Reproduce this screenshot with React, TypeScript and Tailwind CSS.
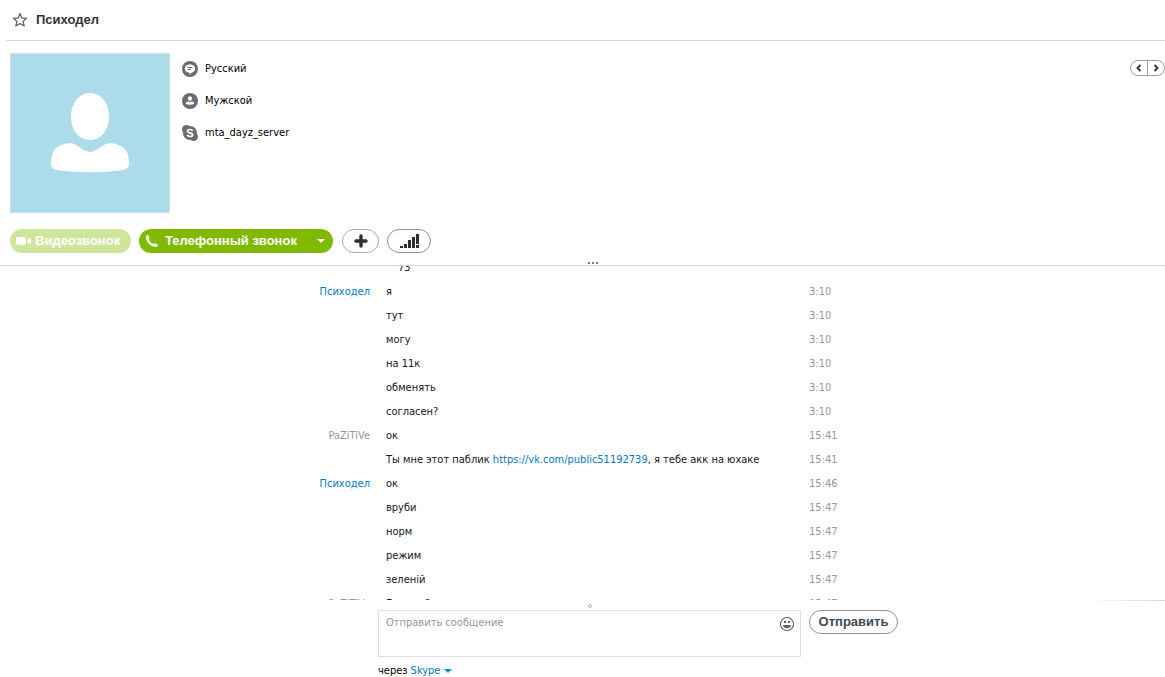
import React from 'react';

interface Message {
    author?: string;
    own?: boolean;
    text: React.ReactNode;
    time: string;
}

const messages: Message[] = [
    { text: <span className="pl-3">73</span>, time: '' },
    { author: 'Психодел', text: 'я', time: '3:10' },
    { text: 'тут', time: '3:10' },
    { text: 'могу', time: '3:10' },
    { text: 'на 11к', time: '3:10' },
    { text: 'обменять', time: '3:10' },
    { text: 'согласен?', time: '3:10' },
    { author: 'PaZiTiVe', own: true, text: 'ок', time: '15:41' },
    {
        text: (
            <>
                Ты мне этот паблик{' '}
                <a href="https://vk.com/public51192739" className="text-[#0078ca]">https://vk.com/public51192739</a>
                , я тебе акк на юхаке
            </>
        ),
        time: '15:41',
    },
    { author: 'Психодел', text: 'ок', time: '15:46' },
    { text: 'вруби', time: '15:47' },
    { text: 'норм', time: '15:47' },
    { text: 'режим', time: '15:47' },
    { text: 'зеленій', time: '15:47' },
    { author: 'PaZiTiVe', own: true, text: 'Готово ?', time: '15:47' },
];

const StarIcon = () => (
    <svg width="16" height="16" viewBox="0 0 16 16" fill="none" stroke="#66676b" strokeWidth="1.3" strokeLinejoin="round">
        <path d="M8 1.6 L9.8 6 L14.6 6.3 L11 9.4 L12.2 14 L8 11.6 L3.8 14 L5 9.4 L1.4 6.3 L6.2 6 Z" />
    </svg>
);

const LanguageIcon = () => (
    <svg width="16" height="16" viewBox="0 0 16 16">
        <circle cx="8" cy="8" r="8" fill="#6b6c71" />
        <path d="M8 3.4 C11 3.4 13.2 5.2 13.2 7.6 C13.2 10 11.4 11.4 9.6 11.7 L7.6 13.4 L7.4 11.8 C4.8 11.7 2.8 10 2.8 7.6 C2.8 5.2 5 3.4 8 3.4 Z" fill="#fff" />
        <path d="M5.5 6.5 H10.5 M5.5 8.5 H9" stroke="#6b6c71" strokeWidth="1" />
    </svg>
);

const GenderIcon = () => (
    <svg width="16" height="16" viewBox="0 0 16 16">
        <circle cx="8" cy="8" r="8" fill="#6b6c71" />
        <ellipse cx="8" cy="5.6" rx="2" ry="2.4" fill="#fff" />
        <path d="M3.8 11 C3.8 9.4 5 8.6 6.2 8.6 Q8 10 9.8 8.6 C11 8.6 12.2 9.4 12.2 11 Q8 12.6 3.8 11 Z" fill="#fff" />
    </svg>
);

const SkypeIcon = () => (
    <svg width="16" height="16" viewBox="0 0 16 16">
        <circle cx="4.4" cy="4.4" r="4.4" fill="#6b6c71" />
        <circle cx="11.6" cy="11.6" r="4.4" fill="#6b6c71" />
        <circle cx="8" cy="8" r="7" fill="#6b6c71" />
        <path d="M10.6 5.9 C10.2 4.9 9.2 4.5 8 4.5 C6.6 4.5 5.5 5.1 5.5 6.2 C5.5 8.5 10.6 7.2 10.6 9.7 C10.6 10.9 9.5 11.5 8.1 11.5 C6.7 11.5 5.6 10.9 5.3 9.8" fill="none" stroke="#fff" strokeWidth="1.7" />
    </svg>
);

const Avatar = () => (
    <svg viewBox="0 0 158 158" className="h-40 w-40 shrink-0 border border-[#d9dcde] bg-[#acdbe9]" role="img" aria-label="Психодел">
        <path d="M79 39 C90 39 98 49 98 63 C98 76 90 86 79 86 C68 86 60 76 60 63 C60 49 68 39 79 39 Z" fill="#fff" />
        <path d="M40 107 C41 98 43 95 48 92 C54 89 60 88 65 91 C71 94 74 98 79 98 C84 98 87 94 93 91 C98 88 104 89 110 92 C115 95 117 98 118 107 C119 113 116 115 112 116 C94 119 64 119 46 116 C42 115 39 113 40 107 Z" fill="#fff" />
    </svg>
);

const VideoIcon = () => (
    <svg width="15" height="10" viewBox="0 0 15 10" fill="#fff">
        <rect x="0" y="1" width="10" height="8" rx="2" />
        <path d="M11 4.2 L15 1.5 V8.5 L11 5.8 Z" />
    </svg>
);

const PhoneIcon = () => (
    <svg width="14" height="14" viewBox="0 0 14 14" fill="#fff">
        <path d="M1 3 C1 1.6 2 1 3 1 L4.6 3.6 C4.6 4.4 3.8 4.8 3.9 5.4 C4.6 7.4 6.4 9.2 8.4 10 C9 10.1 9.4 9.3 10.2 9.3 L13 10.8 C13 12 12.2 13 11 13 C5.6 12.8 1.2 8.4 1 3 Z" />
    </svg>
);

const SignalIcon = () => (
    <svg width="20" height="14" viewBox="-1 0 20 14" fill="#2c2f38" shapeRendering="crispEdges">
        <rect x="0" y="12" width="3" height="2" />
        <rect x="4" y="10" width="3" height="4" />
        <rect x="8" y="6" width="3" height="8" />
        <rect x="12" y="3" width="3" height="11" />
        <rect x="16" y="0" width="3" height="10" />
        <rect x="16" y="11" width="3" height="3" />
    </svg>
);

const SmileIcon = () => (
    <svg width="16" height="16" viewBox="0 0 16 16">
        <circle cx="8" cy="8" r="6.5" fill="none" stroke="#5f6064" strokeWidth="1.1" />
        <rect x="5" y="5" width="2" height="2" fill="#5f6064" />
        <rect x="9" y="5" width="2" height="2" fill="#5f6064" />
        <path d="M4 9 H12 C11.6 11.2 10 12.3 8 12.3 C6 12.3 4.4 11.2 4 9 Z" fill="#5f6064" />
    </svg>
);

const details = [
    { icon: <LanguageIcon />, text: 'Русский' },
    { icon: <GenderIcon />, text: 'Мужской' },
    { icon: <SkypeIcon />, text: 'mta_dayz_server' },
];

function MessageRow({ author, own, text, time }: Message) {
    return (
        <li className="grid h-6 grid-cols-[1fr_423px_1fr] items-center">
            <span className={`pr-2 text-right ${own ? 'text-[#96979b]' : 'text-[#0078ca]'}`}>{author}</span>
            <span className="pl-2 whitespace-nowrap text-[#15161c]">{text}</span>
            <time className="pl-2 text-[#96979b]">{time}</time>
        </li>
    );
}

export default function App() {
    return (
        <div className="flex h-screen flex-col overflow-hidden bg-white font-['DejaVu_Sans_Condensed','DejaVu_Sans',sans-serif] text-[11px] leading-4 text-black">
            <header className="ml-1.5 flex h-[41px] shrink-0 items-center gap-2 border-b border-[#d6d7d9] pl-1.5">
                <button aria-label="В избранное"><StarIcon /></button>
                <h1 className="font-['Liberation_Sans',sans-serif] text-[13px] font-bold text-[#333333]">Психодел</h1>
            </header>

            <section className="relative shrink-0 border-b border-[#d6d7d9] pt-3 pb-3 pl-2.5">
                <div className="flex gap-3">
                    <Avatar />
                    <ul className="flex flex-1 flex-col gap-4 pt-2">
                        {details.map((d) => (
                            <li key={d.text} className="flex items-center gap-[7px]">
                                {d.icon}
                                <span>{d.text}</span>
                            </li>
                        ))}
                    </ul>
                    <div className="mt-[7px] flex h-4 w-[35px] rounded-full border border-[#9b9ea3]">
                        <button aria-label="Назад" className="flex flex-1 items-center justify-center border-r border-[#9b9ea3]">
                            <svg width="6" height="8" viewBox="0 0 6 8" fill="none" stroke="#2c2f38" strokeWidth="1.8"><path d="M4.5 1 L1.5 4 L4.5 7" /></svg>
                        </button>
                        <button aria-label="Вперёд" className="flex flex-1 items-center justify-center">
                            <svg width="6" height="8" viewBox="0 0 6 8" fill="none" stroke="#2c2f38" strokeWidth="1.8"><path d="M1.5 1 L4.5 4 L1.5 7" /></svg>
                        </button>
                    </div>
                </div>

                <div className="mt-4 flex gap-2 font-['Liberation_Sans',sans-serif] text-[13px] font-bold text-white">
                    <button className="flex h-6 w-[121px] items-center gap-1 rounded-full bg-[#cde69b] pl-1.5 whitespace-nowrap">
                        <VideoIcon />
                        Видеозвонок
                    </button>
                    <button className="flex h-6 w-[194px] items-center rounded-full bg-[#80ba00] pl-1.5 whitespace-nowrap">
                        <PhoneIcon />
                        <span className="flex-1 pl-1.5 text-left">Телефонный звонок</span>
                        <svg width="8" height="4" viewBox="0 0 8 4" fill="#fff" className="mr-2"><path d="M0 0 H8 L4 4 Z" /></svg>
                    </button>
                    <button aria-label="Добавить" className="ml-px flex h-6 w-[37px] items-center justify-center rounded-full border border-[#a9abaf]">
                        <svg width="14" height="14" viewBox="0 0 14 14" stroke="#2c2f38" strokeWidth="3.4" strokeLinecap="round"><path d="M7 2 V12 M2 7 H12" /></svg>
                    </button>
                    <button aria-label="Качество связи" className="flex h-6 w-11 items-center justify-center rounded-full border border-[#8f9297]">
                        <SignalIcon />
                    </button>
                </div>

                <svg width="10" height="2" viewBox="0 0 10 2" fill="#4f86b5" shapeRendering="crispEdges" className="absolute bottom-px left-[588px]">
                    <path d="M0 0 H2 V2 H0 Z M4 0 H6 V2 H4 Z M8 0 H10 V2 H8 Z" />
                </svg>
            </section>

            <main className="min-h-0 flex-1 overflow-hidden">
                <ul className="-mt-2.5 pl-3.5">
                    {messages.map((m, i) => (
                        <MessageRow key={i} {...m} />
                    ))}
                </ul>
            </main>

            <footer className="shrink-0 bg-white pl-3.5">
                <div className="ml-auto h-px w-20 bg-linear-to-r from-white to-[#d6d7d9]" />
                <div className="flex h-[9px] items-center justify-center">
                    <span className="h-1 w-1 rounded-full border border-[#8dbbd6]" />
                </div>
                <form className="grid grid-cols-[1fr_423px_1fr]" onSubmit={(e) => e.preventDefault()}>
                    <div className="relative col-start-2 h-[47px]">
                        <textarea
                            aria-label="Отправить сообщение"
                            placeholder="Отправить сообщение"
                            className="block h-full w-full resize-none border border-[#dfe0e2] py-1 pr-8 pl-[7px] outline-none placeholder:text-[#96979b]"
                        />
                        <button type="button" aria-label="Смайлики" className="absolute top-1.5 right-1.5"><SmileIcon /></button>
                    </div>
                    <button className="ml-2 h-6 w-[89px] rounded-full border border-[#8f9297] font-['Liberation_Sans',sans-serif] text-[13px] font-bold text-[#414a55]">
                        Отправить
                    </button>
                    <div className="col-start-2 mt-2 flex h-3 items-center gap-[3px]">
                        <span>через</span>
                        <button type="button" className="flex items-center gap-1 text-[#0078ca]">
                            Skype
                            <svg width="8" height="4" viewBox="0 0 8 4" fill="#0095cc"><path d="M0 0 H8 L4 4 Z" /></svg>
                        </button>
                    </div>
                </form>
            </footer>
        </div>
    );
}
